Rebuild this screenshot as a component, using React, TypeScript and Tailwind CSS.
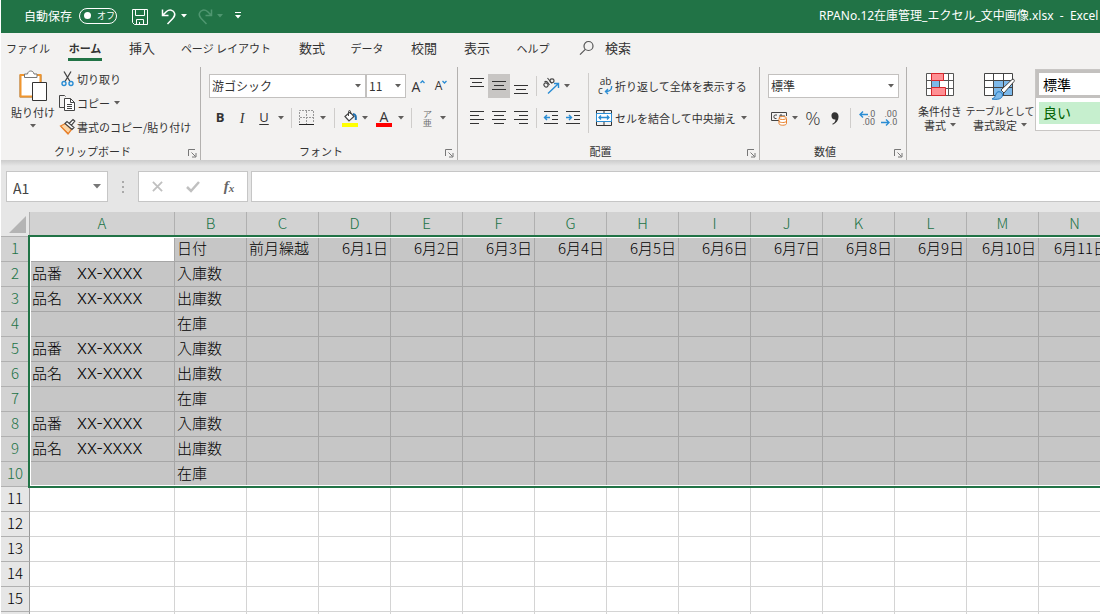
import type { ReactNode } from "react";
import clsx from "clsx";

const tabs = [
  { label: "ファイル", size: "w-[54px] text-[11px]" },
  { label: "ホーム", size: "w-[60px] text-[11px]" },
  { label: "挿入", size: "w-[54px] text-[13px]" },
  { label: "ページ レイアウト", size: "w-[114px] text-[11px]" },
  { label: "数式", size: "w-[58px] text-[13px]" },
  { label: "データ", size: "w-[52px] text-[11px]" },
  { label: "校閲", size: "w-[62px] text-[13px]" },
  { label: "表示", size: "w-[44px] text-[13px]" },
  { label: "ヘルプ", size: "w-[68px] text-[11px]" },
];

const columns = ["A", "B", "C", "D", "E", "F", "G", "H", "I", "J", "K", "L", "M", "N"];
const dates = Array.from({ length: 11 }, (_, i) => `6月${i + 1}日`);
const labels = ["入庫数", "出庫数", "在庫"];
const SELECTED_ROWS = 10;
const rows = Array.from({ length: 16 }, (_, i) => i + 1);

function cellText(row: number, col: number) {
  if (row === 1) {
    if (col === 1) return "日付";
    if (col === 2) return "前月繰越";
    return col > 2 ? dates[col - 3] : "";
  }
  if (row > SELECTED_ROWS) return "";
  const step = (row - 2) % 3;
  if (col === 1) return labels[step];
  if (col === 0 && step < 2) return step === 0 ? "品番" : "品名";
  return "";
}

function Caret({ className = "fill-[#605e5c]" }: { className?: string }) {
  return (
    <svg width="6" height="4" viewBox="0 0 6 4" className={clsx("shrink-0", className)}>
      <path d="M0 0h6L3 3.5z" />
    </svg>
  );
}

function Tool({ label, className, children }: { label: string; className: string; children: ReactNode }) {
  return (
    <button aria-label={label} className={clsx("flex shrink-0 items-center justify-center", className)}>
      {children}
    </button>
  );
}

function Divider({ className }: { className: string }) {
  return (
    <span className={clsx("flex shrink-0 justify-center", className)}>
      <span className="h-5 w-px bg-[#cfcdcb]" />
    </span>
  );
}

function Group({ title, className, children }: { title: string; className: string; children: ReactNode }) {
  return (
    <section className={clsx("flex shrink-0 flex-col border-r border-[#b3b1af]", className)}>
      <div className="flex h-[76px] items-start pl-2">{children}</div>
      <div className="flex h-4 items-center">
        <h2 className="flex-1 text-center text-[11px] leading-4">{title}</h2>
        <Tool label={`${title}の設定`} className="h-4 w-4">
          <svg width="9" height="9" viewBox="0 0 9 9" fill="none" stroke="#777" className="mt-1">
            <path d="M.5 7V.5H7M3.500 3.500l4 4M8 4v4H4" />
          </svg>
        </Tool>
      </div>
    </section>
  );
}

function Dropdown({ label, value, className }: { label: string; value: string; className: string }) {
  return (
    <div className={clsx("grid h-6 items-center border border-[#c3c1bf] bg-white", className)}>
      <select aria-label={label} className="col-start-1 row-start-1 h-full w-full appearance-none bg-transparent pl-[2px] text-[12px] leading-5">
        <option>{value}</option>
      </select>
      <Caret className="pointer-events-none col-start-1 row-start-1 mr-1 justify-self-end fill-[#605e5c]" />
    </div>
  );
}

function Lines({ d }: { d: string }) {
  return (
    <svg width="16" height="16" viewBox="0 0 16 16" fill="none" stroke="#333">
      <path d={d} />
    </svg>
  );
}

function TitleBar() {
  return (
    <header className="flex h-[33px] shrink-0 items-center bg-[#217346] pb-[2px] text-[12px] text-white">
      <div className="flex w-[818px] shrink-0 items-center pl-[23px]">
        <label htmlFor="autosave">自動保存</label>
        <span className="ml-[7px] grid h-4 w-[38px] items-center rounded-full border border-white">
          <input id="autosave" type="checkbox" role="switch" className="col-start-1 row-start-1 h-full w-full appearance-none" />
          <span className="pointer-events-none col-start-1 row-start-1 flex items-center gap-[6px] pl-1 text-[9px] leading-3">
            <span className="h-[7px] w-[7px] rounded-full bg-white" />
            オフ
          </span>
        </span>
        <Tool label="上書き保存" className="ml-[13px] w-5">
          <svg width="18" height="18" viewBox="0 0 18 18" fill="none" stroke="#fff" className="mt-[3px]">
            <path d="M1.500 1.500h15v15h-13l-2-2zM4.500 1.500v6h9v-6M5.500 16.500v-5h7v5M8.500 14v2" />
          </svg>
        </Tool>
        <Tool label="元に戻す" className="ml-[10px] w-[18px]">
          <svg width="16" height="18" viewBox="0 0 16 18" fill="none" stroke="#fff" strokeWidth="1.500" className="mt-[2px]">
            <path d="M1.500 1.500v6h6M2 7l3.500-3.500c3-2.500 7-1.500 8 1.500.8 2.200-.3 4-1.500 5.200L6.500 16" />
          </svg>
        </Tool>
        <Tool label="元に戻す履歴" className="w-3">
          <Caret className="fill-white" />
        </Tool>
        <Tool label="やり直し" className="ml-[6px] w-[18px]">
          <svg width="16" height="18" viewBox="0 0 16 18" fill="none" stroke="#4f9670" strokeWidth="1.500" className="mt-[2px]">
            <path d="M14.500 1.500v6h-6M14 7l-3.500-3.500c-3-2.500-7-1.500-8 1.500-.8 2.200.3 4 1.500 5.200L9.500 16" />
          </svg>
        </Tool>
        <Tool label="やり直し履歴" className="w-3">
          <Caret className="fill-[#4f9670]" />
        </Tool>
        <Tool label="クイック アクセスのユーザー設定" className="ml-[6px] w-3">
          <svg width="6" height="7" viewBox="0 0 6 7" fill="#fff">
            <path d="M0 0h6v1H0zM0 3h6L3 6.500z" />
          </svg>
        </Tool>
      </div>
      <h1 className="whitespace-pre font-['Noto_Sans','Noto_Sans_CJK_JP',sans-serif]">
        RPANo.12在庫管理_エクセル_文中画像.xlsx{"  -  "}Excel
      </h1>
    </header>
  );
}

function TabRow() {
  return (
    <nav className="flex h-[31px] shrink-0 items-stretch">
      {tabs.map((tab) => {
        const active = tab.label === "ホーム";
        return (
          <button key={tab.label} className={clsx("flex shrink-0 flex-col items-center whitespace-nowrap pt-[5px] leading-5", tab.size, active && "font-bold")}>
            {tab.label}
            {active && <span className="h-[3px] w-[34px] bg-[#217346]" />}
          </button>
        );
      })}
      <button className="flex items-center gap-[10px] pb-[2px] pl-3 text-[13px]">
        <svg width="16" height="16" viewBox="0 0 16 16" fill="none" stroke="#555" strokeWidth="1.200">
          <circle cx="9.500" cy="6" r="4.500" />
          <path d="M6.300 9.300L1 14.700" />
        </svg>
        検索
      </button>
    </nav>
  );
}

function ClipboardGroup() {
  return (
    <Group title="クリップボード" className="w-[200px]">
      <button className="flex w-12 shrink-0 flex-col items-center pt-[3px] text-[11px] leading-4">
        <svg width="28" height="32" viewBox="0 0 28 32" fill="none">
          <path d="M1 5h21v22H1z" fill="#fff" stroke="#777" />
          <path d="M6 5H1.500v21.500H14M17 5h4.500v7" stroke="#f0962f" strokeWidth="2" />
          <path d="M5.500 7.500V4h3c.5-4 6-4 6.500 0h3v3.500z" fill="#fff" stroke="#777" />
          <path d="M13.500 12.500h14v18h-14z" fill="#fff" stroke="#333" />
        </svg>
        <span className="mt-[2px] whitespace-nowrap">貼り付け</span>
        <span className="flex h-3 items-center">
          <Caret />
        </span>
      </button>
      <div className="flex flex-col pl-[2px] text-[11px]">
        <button className="flex h-6 items-center">
          <svg width="18" height="18" viewBox="0 0 18 18" fill="none">
            <path d="M5 1.500l6 10M12 1.500l-6 10" stroke="#444" strokeWidth="1.300" />
            <circle cx="5" cy="13.500" r="2" stroke="#2a8dd4" strokeWidth="1.400" />
            <circle cx="12" cy="13.500" r="2" stroke="#2a8dd4" strokeWidth="1.400" />
          </svg>
          切り取り
        </button>
        <div className="flex h-6 items-center">
          <button className="flex items-center">
            <svg width="18" height="18" viewBox="0 0 18 18" fill="none" stroke="#444">
              <path d="M6 13.500H.5v-12h5l1 1" />
              <path d="M5.500 4.500h6l4 4v8h-10z" fill="#fff" />
              <path d="M11.500 4.500v4h4M8 10.500h5M8 12.500h5M8 14.500h5" />
            </svg>
            コピー
          </button>
          <Tool label="コピーのオプション" className="w-[14px]">
            <Caret />
          </Tool>
        </div>
        <button className="flex h-6 items-center whitespace-nowrap">
          <svg width="18" height="18" viewBox="0 0 18 18" fill="none">
            <path d="M1.500 8l5-2.500 6 6-3.500 4.500z" fill="#fbd5a5" stroke="#e8812d" strokeWidth="1.300" />
            <path d="M2 9l7 6" stroke="#e8812d" />
            <path d="M6 5.500l2-2 7 6-2 2zM10.500 5L14 1.500l1.800 1.600-3.300 4" fill="#fff" stroke="#444" strokeWidth="1.200" />
          </svg>
          書式のコピー/貼り付け
        </button>
      </div>
    </Group>
  );
}

function FontGroup() {
  return (
    <Group title="フォント" className="w-[257px]">
      <div className="flex flex-col pt-[3px]">
        <div className="flex h-8 items-center">
          <Dropdown label="フォント名" value="游ゴシック" className="w-[157px]" />
          <Dropdown label="フォント サイズ" value="11" className="w-10" />
          <Tool label="フォント サイズの拡大" className="w-[25px] font-['Open_Sans',sans-serif] text-[14px]">
            A
            <svg width="5" height="4" viewBox="0 0 5 4" fill="none" stroke="#2a8dd4" strokeWidth="1.300" className="mb-2">
              <path d="M.5 3l2-2 2 2" />
            </svg>
          </Tool>
          <Tool label="フォント サイズの縮小" className="w-[20px] font-['Open_Sans',sans-serif] text-[12px]">
            A
            <svg width="5" height="4" viewBox="0 0 5 4" fill="none" stroke="#2a8dd4" strokeWidth="1.300" className="mb-2">
              <path d="M.5 1l2 2 2-2" />
            </svg>
          </Tool>
        </div>
        <div className="flex h-8 items-center font-['Open_Sans',sans-serif] text-[13px]">
          <Tool label="太字" className="w-[22px] font-bold">B</Tool>
          <Tool label="斜体" className="w-[22px] font-['Liberation_Serif',serif] text-[14px] italic">I</Tool>
          <Tool label="下線" className="w-[22px] underline underline-offset-2">U</Tool>
          <Tool label="下線の種類" className="w-3"><Caret /></Tool>
          <Divider className="w-2" />
          <Tool label="罫線" className="w-6">
            <svg width="16" height="16" viewBox="0 0 16 16" fill="none">
              <path d="M.5 13V.5h14V13M7.500 1v13M1 7.500h14" stroke="#999" strokeDasharray="2 1" />
              <path d="M0 14.500h15" stroke="#222" />
            </svg>
          </Tool>
          <Tool label="罫線の種類" className="w-2"><Caret /></Tool>
          <Divider className="w-[14px]" />
          <Tool label="塗りつぶしの色" className="w-[18px]">
            <svg width="16" height="17" viewBox="0 0 16 17" fill="none">
              <path d="M3 6.500L8 2l4 4.500-5 4.500z" fill="#fff" stroke="#444" strokeWidth="1.200" />
              <path d="M6.500 6V1.500c0-1.300 2-1.300 2 0V4" stroke="#444" />
              <path d="M11 4c3 0 3 3 2.800 6" stroke="#1d6fb0" strokeWidth="2" />
              <path d="M0 13h16v4H0z" fill="#ff0" />
            </svg>
          </Tool>
          <Tool label="塗りつぶしの色の一覧" className="w-3"><Caret /></Tool>
          <Tool label="フォントの色" className="w-[26px] flex-col text-[14px] leading-[13px]">
            A
            <span className="h-1 w-4 bg-[#f00]" />
          </Tool>
          <Tool label="フォントの色の一覧" className="w-2"><Caret /></Tool>
          <Divider className="w-3" />
          <Tool label="ふりがな" className="w-5 flex-col text-[9px] leading-[9px] text-[#666]">
            <span>ア</span>
            <span>亜</span>
          </Tool>
          <Tool label="ふりがなの設定" className="w-3"><Caret /></Tool>
        </div>
      </div>
    </Group>
  );
}

function AlignmentGroup() {
  return (
    <Group title="配置" className="w-[302px]">
      <div className="flex flex-col pt-[3px]">
        <div className="flex h-8 items-center">
          <Tool label="上揃え" className="h-6 w-[22px]"><Lines d="M1 .5h14M3 4.500h10M1 8.500h14" /></Tool>
          <Tool label="上下中央揃え" className="h-6 w-[22px] bg-[#c8c6c4]"><Lines d="M1 3.500h14M3 7.500h10M1 11.500h14" /></Tool>
          <Tool label="下揃え" className="h-6 w-[22px]"><Lines d="M1 7.500h14M3 11.500h10M1 15.500h14" /></Tool>
          <Divider className="w-2" />
          <Tool label="方向" className="w-[22px]">
            <svg width="18" height="18" viewBox="0 0 18 18" fill="none">
              <g stroke="#444" strokeWidth="1.100">
                <ellipse cx="4" cy="8" rx="2.200" ry="1.900" transform="rotate(45 4 8)" />
                <path d="M2.500 5c2-1.500 3 0 5 3M5.500 1l4.500 5.500" />
                <ellipse cx="10" cy="3.800" rx="2" ry="1.900" />
              </g>
              <path d="M6 16.500L16 7M12 6.500h4.500V11" stroke="#2a8dd4" strokeWidth="1.400" />
            </svg>
          </Tool>
          <Tool label="方向の一覧" className="w-[10px]"><Caret /></Tool>
        </div>
        <div className="flex h-8 items-center">
          <Tool label="左揃え" className="w-[22px]"><Lines d="M1 1.500h14M1 5.500h9M1 9.500h14M1 13.500h9" /></Tool>
          <Tool label="中央揃え" className="w-[22px]"><Lines d="M1 1.500h14M3 5.500h10M1 9.500h14M3 13.500h10" /></Tool>
          <Tool label="右揃え" className="w-[22px]"><Lines d="M1 1.500h14M6 5.500h9M1 9.500h14M6 13.500h9" /></Tool>
          <Divider className="w-2" />
          <Tool label="インデントを減らす" className="w-[22px]">
            <svg width="16" height="16" viewBox="0 0 16 16" fill="none" stroke="#333">
              <path d="M1 1.500h14M9 5.500h6M9 9.500h6M1 13.500h14" />
              <path d="M7 7.500H1.500M4 5L1.500 7.500 4 10" stroke="#2a8dd4" strokeWidth="1.400" />
            </svg>
          </Tool>
          <Tool label="インデントを増やす" className="w-[22px]">
            <svg width="16" height="16" viewBox="0 0 16 16" fill="none" stroke="#333">
              <path d="M1 1.500h14M9 5.500h6M9 9.500h6M1 13.500h14" />
              <path d="M1 7.500h5.500M4 5l2.500 2.500L4 10" stroke="#2a8dd4" strokeWidth="1.400" />
            </svg>
          </Tool>
        </div>
      </div>
      <span className="mx-1 mt-[6px] h-[60px] w-px bg-[#cfcdcb]" />
      <div className="flex flex-col whitespace-nowrap pl-[3px] pt-[3px] text-[11px]">
        <button className="flex h-8 items-center gap-[2px]">
          <span className="flex w-[17px] flex-col pl-[2px] font-['Open_Sans',sans-serif] text-[10px] leading-[9px]">
            <span>ab</span>
            <span className="flex gap-px">
              c
              <svg width="9" height="9" viewBox="0 0 9 9" fill="none" stroke="#2a8dd4" strokeWidth="1.400">
                <path d="M7.500 0c.5 3-1 5.500-6 5.500M4 3L1.500 5.500 4 8" />
              </svg>
            </span>
          </span>
          折り返して全体を表示する
        </button>
        <div className="flex h-8 items-center">
          <button className="flex items-center gap-[3px]">
            <svg width="16" height="16" viewBox="0 0 16 16" fill="none" stroke="#333">
              <path d="M.5.500h15v15H.5zM8 0v4M8 12v4" />
              <path d="M.5 3.500h15v8H.5z" fill="#fff" stroke="#2a8dd4" />
              <path d="M3 7.500h10M5 5.500l-2 2 2 2M11 5.500l2 2-2 2" stroke="#2a8dd4" strokeWidth="1.300" />
            </svg>
            セルを結合して中央揃え
          </button>
          <Tool label="結合の一覧" className="w-4"><Caret /></Tool>
        </div>
      </div>
    </Group>
  );
}

function NumberGroup() {
  return (
    <Group title="数値" className="w-[147px]">
      <div className="flex flex-col pt-[3px]">
        <div className="flex h-8 items-center">
          <Dropdown label="表示形式" value="標準" className="w-[131px]" />
        </div>
        <div className="flex h-8 items-center">
          <Tool label="通貨表示形式" className="w-[22px]">
            <svg width="17" height="16" viewBox="0 0 17 16" fill="none" stroke="#444">
              <path d="M8 10.500H.5v-8h15V6" />
              <path d="M6 5H4c-1.500 0-1.500 3.500 0 3.500h1.500M9 8V5h2v2M13 5v2" />
              <path d="M8 8.500v5c0 2.300 7.500 2.300 7.500 0v-5" fill="#fff" stroke="#e8812d" />
              <ellipse cx="11.700" cy="8" rx="3.700" ry="1.500" fill="#fff" stroke="#e8812d" />
              <path d="M8 11c0 2 7.500 2 7.500 0" stroke="#e8812d" />
            </svg>
          </Tool>
          <Tool label="通貨の一覧" className="w-[10px]"><Caret /></Tool>
          <Tool label="パーセント スタイル" className="w-[26px] font-['Open_Sans',sans-serif] text-[19px] leading-6 font-light">%</Tool>
          <Tool label="桁区切りスタイル" className="w-[18px]">
            <svg width="8" height="13" viewBox="0 0 9 14" fill="#333">
              <path d="M4 0c3 0 4.500 2 4.500 5 0 4-2.500 7-6.500 9l-.5-1c2.500-1.500 3.500-3 3.500-5C2.500 8.500.5 7 .5 4 .5 1.500 2 0 4 0z" />
            </svg>
          </Tool>
          <Divider className="w-[12px]" />
          <Tool label="小数点以下の表示桁数を増やす" className="w-[22px] flex-col font-['Roboto',sans-serif] text-[9px] leading-[8px] text-[#666]">
            <span className="flex items-center">
              <svg width="9" height="7" viewBox="0 0 9 7" fill="none" stroke="#2a8dd4" strokeWidth="1.400">
                <path d="M9 3.500H1M4 .5l-3 3 3 3" />
              </svg>
              .0
            </span>
            <span className="self-end pr-[3px]">.00</span>
          </Tool>
          <Tool label="小数点以下の表示桁数を減らす" className="w-[22px] flex-col font-['Roboto',sans-serif] text-[9px] leading-[8px] text-[#666]">
            <span className="self-end pr-[3px]">.00</span>
            <span className="flex items-center">
              <svg width="9" height="7" viewBox="0 0 9 7" fill="none" stroke="#2a8dd4" strokeWidth="1.400">
                <path d="M0 3.500h8M5 .5l3 3-3 3" />
              </svg>
              .0
            </span>
          </Tool>
        </div>
      </div>
    </Group>
  );
}

function StylesGroup() {
  return (
    <section className="flex min-w-0 flex-1 items-start overflow-hidden pl-[6px] text-[11px] leading-[14px]">
      <button className="flex w-[54px] shrink-0 flex-col items-center whitespace-nowrap pt-[6px]">
        <svg width="28" height="24" viewBox="0 0 28 24" fill="none">
          <path d="M.5.500h27v22H.5zM.5 7.500h27M.5 15.500h27M5.500 0v23M13.500 0v23M22.500 0v23" fill="#fff" stroke="#555" />
          <path d="M5.500.500h12v7h-12zM5.500 14.500h14v8h-14z" fill="#ff8f93" stroke="#d8262c" />
          <path d="M6 8h7v6H6z" fill="#7db9ea" />
        </svg>
        <span className="mt-[7px]">条件付き</span>
        <span className="flex items-center gap-1">書式 <Caret /></span>
      </button>
      <button className="flex w-[66px] shrink-0 flex-col items-center whitespace-nowrap pt-[6px]">
        <svg width="32" height="28" viewBox="0 0 32 28" fill="none">
          <path d="M.5.500h28v22H.5z" fill="#fff" stroke="#444" />
          <path d="M10 8h18v14H10z" fill="#7db9ea" />
          <path d="M.5 7.500h28M.5 14.500h28M9.500 0v23M19.500 0v23" stroke="#444" />
          <path d="M17 17L28 6.500c1.500-1 3 .5 2 2L20 20z" fill="#fff" stroke="#444" />
          <path d="M8 26c3-1 3-3 4.500-6 1.500-2.500 6-1 6 2 0 4-5 5-10.500 4z" fill="#7db9ea" stroke="#1f78c1" />
        </svg>
        <span className="mt-[3px] text-[10px]">テーブルとして</span>
        <span className="flex items-center gap-1">書式設定 <Caret /></span>
      </button>
      <div className="ml-[2px] mt-[2px] flex h-[62px] flex-1 flex-col border-y border-l border-[#c8c6c4] bg-white text-[14px]">
        <button className="h-7 border-[3px] border-r-0 border-[#c3c1bf] bg-white pl-1 text-left leading-5 text-black">標準</button>
        <button className="ml-[3px] mt-1 h-[22px] bg-[#c6efce] pb-[2px] pl-1 text-left leading-5 text-[#006100]">良い</button>
      </div>
    </section>
  );
}

function FormulaBar() {
  return (
    <div className="flex h-[52px] shrink-0 flex-col bg-[#e6e6e6]">
      <div className="h-[6px] bg-linear-to-b from-[#cccccc] to-[#e6e6e6]" />
      <div className="mt-[5px] flex h-[31px] items-stretch pl-[5px]">
        <div className="flex w-[102px] shrink-0 items-center border border-[#c6c6c6] bg-white">
          <input aria-label="名前ボックス" defaultValue="A1" className="w-0 flex-1 pl-[6px] pt-1 font-['Noto_Sans_CJK_JP',sans-serif] text-[14px] text-[#444] outline-none" />
          <Tool label="名前の一覧" className="w-5">
            <svg width="8" height="5" viewBox="0 0 8 5" fill="#777"><path d="M0 0h8L4 4.500z" /></svg>
          </Tool>
        </div>
        <span className="flex w-[30px] shrink-0 items-center justify-center">
          <svg width="2" height="12" viewBox="0 0 2 12" fill="#aaa"><path d="M0 0h2v2H0zM0 5h2v2H0zM0 10h2v2H0z" /></svg>
        </span>
        <div className="flex w-[110px] shrink-0 border border-[#c6c6c6] bg-white">
          <Tool label="キャンセル" className="w-9">
            <svg width="11" height="11" viewBox="0 0 12 12" fill="none" stroke="#c0c0c0" strokeWidth="2"><path d="M1 1l10 10M11 1L1 11" /></svg>
          </Tool>
          <Tool label="入力" className="w-9">
            <svg width="14" height="12" viewBox="0 0 14 12" fill="none" stroke="#c0c0c0" strokeWidth="2.500"><path d="M1 6l4 4 8-9" /></svg>
          </Tool>
          <Tool label="関数の挿入" className="w-9 font-['Liberation_Serif',serif] text-[15px] font-bold italic text-[#666]">
            f<span className="mt-1 text-[11px]">x</span>
          </Tool>
        </div>
        <input aria-label="数式バー" className="ml-[3px] min-w-0 flex-1 border border-r-0 border-[#c6c6c6] bg-white px-2 text-[14px] outline-none" />
      </div>
    </div>
  );
}

function Sheet() {
  return (
    <main className="relative min-h-0 flex-1 overflow-hidden bg-white">
      <table className="w-max table-fixed border-separate border-spacing-0 text-[15px] leading-5 font-light text-black">
        <colgroup>
          <col className="w-[29px]" />
          {columns.map((name) => (
            <col key={name} className={name === "A" ? "w-[145px]" : "w-[72px]"} />
          ))}
        </colgroup>
        <thead>
          <tr className="h-[25px]">
            <th aria-label="すべて選択" className="border-r border-b border-[#b0b0b0] bg-[#e6e6e6] p-0">
              <svg width="17" height="17" viewBox="0 0 17 17" fill="#b4b4b4" className="ml-2">
                <path d="M17 0v17H0z" />
              </svg>
            </th>
            {columns.map((name) => (
              <th key={name} scope="col" className="border-r border-b border-[#b0b0b0] bg-[#d2d2d2] p-0 pb-[2px] font-light text-[#217346]">
                {name}
              </th>
            ))}
          </tr>
        </thead>
        <tbody>
          {rows.map((row) => {
            const selected = row <= SELECTED_ROWS;
            return (
              <tr key={row} className="h-[25px]">
                <th
                  scope="row"
                  className={clsx(
                    "border-r border-b border-r-[#9a9a9a] border-b-[#b0b0b0] p-0 pb-[2px] font-light",
                    selected ? "bg-[#d2d2d2] text-[#217346]" : "bg-[#e6e6e6] text-black"
                  )}
                >
                  {row}
                </th>
                {columns.map((name, col) => {
                  const text = cellText(row, col);
                  return (
                    <td
                      key={name}
                      className={clsx(
                        "whitespace-nowrap border-r border-b p-0 px-[2px] pb-[3px]",
                        selected ? "border-[#a6a6a6]" : "border-[#d4d4d4]",
                        selected && !(row === 1 && col === 0) && "bg-[#c6c6c6]",
                        row === 1 && col > 2 && "text-right"
                      )}
                    >
                      {text}
                      {text && col === 0 && <span className="font-['Inter',sans-serif] leading-none">{"　XX-XXXX"}</span>}
                    </td>
                  );
                })}
              </tr>
            );
          })}
        </tbody>
      </table>
      {/* selection frame over A1:N10 */}
      <div className="pointer-events-none absolute top-[23px] right-0 left-[27px] h-[253px] border-y-2 border-l-2 border-[#217346]">
        <div className="h-full border-y border-l border-white" />
      </div>
    </main>
  );
}

export default function App() {
  return (
    <div className="flex h-screen flex-col overflow-hidden border-l border-white bg-[#f3f2f1] font-['Noto_Sans_CJK_JP',sans-serif] text-[#333]">
      <TitleBar />
      <TabRow />
      <div className="flex h-24 shrink-0 pt-[3px]">
        <ClipboardGroup />
        <FontGroup />
        <AlignmentGroup />
        <NumberGroup />
        <StylesGroup />
      </div>
      <FormulaBar />
      <Sheet />
    </div>
  );
}
